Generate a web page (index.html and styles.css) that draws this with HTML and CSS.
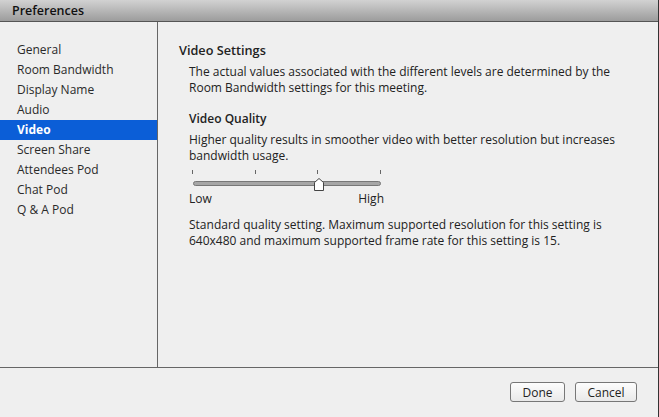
FILE: index.html
```html
<!DOCTYPE html>
<html>
<head>
<meta charset="utf-8">
<link rel="stylesheet" href="styles.css">
</head>
<body>
<div class="window">
  <div class="titlebar">Preferences</div>
  <div class="main">
    <ul class="sidebar">
      <li class="nav-item">General</li>
      <li class="nav-item">Room Bandwidth</li>
      <li class="nav-item">Display Name</li>
      <li class="nav-item">Audio</li>
      <li class="nav-item selected">Video</li>
      <li class="nav-item">Screen Share</li>
      <li class="nav-item">Attendees Pod</li>
      <li class="nav-item">Chat Pod</li>
      <li class="nav-item">Q &amp; A Pod</li>
    </ul>
    <div class="content">
      <h2 class="section-title">Video Settings</h2>
      <div class="section-body">
        <p class="text first">The actual values associated with the different levels are determined by the Room Bandwidth settings for this meeting.</p>
        <h3 class="sub-title">Video Quality</h3>
        <p class="text first">Higher quality results in smoother video with better resolution but increases bandwidth usage.</p>
        <div class="slider">
          <div class="ticks"><span class="tick"></span><span class="tick"></span><span class="tick"></span><span class="tick"></span></div>
          <div class="track"></div>
          <svg class="thumb" width="10" height="13" viewBox="0 0 10 13">
            <path d="M0.5 4.5 L5 0.5 L9.5 4.5 L9.5 12.5 L0.5 12.5 Z" fill="#ffffff" stroke="#444" stroke-width="1"/>
          </svg>
        </div>
        <div class="labels"><span>Low</span><span>High</span></div>
        <p class="text note">Standard quality setting. Maximum supported resolution for this setting is 640x480 and maximum supported frame rate for this setting is 15.</p>
      </div>
    </div>
  </div>
  <div class="footer">
    <button class="btn btn-done">Done</button>
    <button class="btn btn-cancel">Cancel</button>
  </div>
</div>
</body>
</html>
```
FILE: styles.css
```css
html, body {
  margin: 0;
  padding: 0;
  background: #efefef;
}
body {
  font-family: "Open Sans", Lato, sans-serif;
  font-size: 12px;
  color: #222;
}
.window {
  width: 659px;
  height: 417px;
  box-sizing: border-box;
  border-right: 1px solid #333;
  display: flex;
  flex-direction: column;
  background: #efefef;
}
.titlebar {
  height: 21px;
  line-height: 21px;
  border-bottom: 1px solid #555;
  background: linear-gradient(#d2d2d2, #9c9c9c);
  padding-left: 12px;
  font-weight: 600;
  font-size: 12.5px;
  color: #111;
}
.main {
  height: 345px;
  display: flex;
  border-bottom: 1px solid #666;
}
.sidebar {
  list-style: none;
  margin: 0;
  padding: 18px 0 0 0;
  width: 157px;
  border-right: 1px solid #666;
}
.nav-item {
  height: 20px;
  line-height: 20px;
  padding-left: 17px;
  color: #2a2a2a;
}
.nav-item.selected {
  background: #0b5ed7;
  color: #fff;
  font-weight: bold;
}
.content {
  flex: 1;
  padding: 19px 27px 0 21px;
}
.section-title {
  margin: 0;
  font-size: 12.7px;
  line-height: 18px;
  font-weight: 600;
  color: #222;
}
.section-body {
  padding-left: 10px;
}
.text {
  margin: 0;
  line-height: 16px;
  color: #222;
}
.text.first {
  margin-top: 5px;
}
.sub-title {
  margin: 15px 0 0 0;
  font-size: 12px;
  line-height: 16px;
  font-weight: 600;
  color: #222;
}
.slider {
  position: relative;
  width: 196px;
  height: 16px;
  margin-top: 6px;
}
.ticks {
  display: flex;
  justify-content: space-between;
  padding: 0 4px 0 3px;
  height: 4px;
}
.tick {
  width: 1px;
  height: 4px;
  background: #666;
}
.track {
  margin: 7px 0 0 4px;
  width: 188px;
  height: 5px;
  box-sizing: border-box;
  background: #a6a6a6;
  border: 1px solid #777;
  border-radius: 3px;
}
.thumb {
  position: absolute;
  left: 125px;
  top: 8px;
}
.labels {
  width: 195px;
  display: flex;
  justify-content: space-between;
  margin-top: 5px;
  line-height: 16px;
}
.note {
  margin-top: 10px;
}
.footer {
  flex: 1;
  display: flex;
  justify-content: flex-end;
  align-items: flex-start;
  gap: 10px;
  padding: 14px 21px 0 0;
}
.btn {
  height: 20px;
  padding: 0;
  border: 1px solid #777;
  border-radius: 3px;
  background: linear-gradient(#fdfdfd, #e9e9e9);
  font-family: "Open Sans", Lato, sans-serif;
  font-size: 12px;
  color: #222;
}
.btn-done { width: 55px; }
.btn-cancel { width: 62px; }
```
